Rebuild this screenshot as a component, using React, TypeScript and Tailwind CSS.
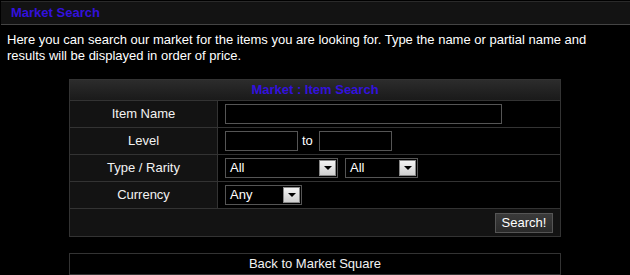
import React from "react";

function Arrow() {
  return (
    <div className="flex h-[16px] w-[17px] items-center justify-center border border-[#888] bg-gradient-to-b from-[#f4f4f4] to-[#cfcfcf]">
      <svg width="8" height="5" viewBox="0 0 8 5">
        <polygon points="0,0 8,0 4,4" fill="#000" />
      </svg>
    </div>
  );
}

function Select({ value, w }: { value: string; w: string }) {
  return (
    <div className={`flex h-[20px] ${w} items-center justify-between border border-[#555] bg-black pl-[4px] pr-[1px] text-[13px] text-white`}>
      <span>{value}</span>
      <Arrow />
    </div>
  );
}

function Row({ label, children }: { label: string; children: React.ReactNode }) {
  return (
    <div className="flex h-[27px] border-b border-[#333]">
      <div className="flex w-[148px] items-center justify-center border-r border-[#333] bg-[#131313] text-[13px] text-[#f2f2f2]">
        {label}
      </div>
      <div className="flex flex-1 items-center gap-[4px] bg-black pl-[7px]">{children}</div>
    </div>
  );
}

export default function App() {
  return (
    <div
      className="h-[275px] w-[630px] overflow-hidden bg-black text-white"
      style={{ fontFamily: '"Liberation Sans", Arial, sans-serif' }}
    >
      <div className="ml-[1px] mt-[1px] flex h-[24px] items-center border-y border-[#2a2a2a] border-b-[#444] bg-[#131313] pl-[10px]">
        <span className="text-[13px] font-bold text-[#3311dd]">Market Search</span>
      </div>
      <p className="mt-[7px] px-[7px] text-[13px] leading-[16px] text-white">
        Here you can search our market for the items you are looking for. Type the name or partial name and results will be displayed in order of price.
      </p>
      <div className="ml-[69px] mt-[15px] w-[492px] border border-[#333]">
        <div className="flex h-[21px] items-center justify-center border-b border-[#333] bg-gradient-to-b from-[#2c2c2c] to-[#1a1a1a]">
          <span className="text-[13px] font-bold text-[#3311dd]">Market : Item Search</span>
        </div>
        <Row label="Item Name">
          <div className="h-[20px] w-[277px] border border-[#555] bg-black" />
        </Row>
        <Row label="Level">
          <div className="h-[20px] w-[73px] border border-[#555] bg-black" />
          <span className="text-[13px] text-white">to</span>
          <div className="ml-[2px] h-[20px] w-[73px] border border-[#555] bg-black" />
        </Row>
        <Row label="Type / Rarity">
          <Select value="All" w="w-[113px]" />
          <div className="ml-[3px]">
            <Select value="All" w="w-[73px]" />
          </div>
        </Row>
        <Row label="Currency">
          <Select value="Any" w="w-[77px]" />
        </Row>
        <div className="flex h-[27px] items-center justify-end bg-[#131313] pr-[7px]">
          <div className="flex h-[20px] w-[58px] items-center justify-center border border-[#555] bg-gradient-to-b from-[#3a3a3a] to-[#2a2a2a] text-[13px] text-white">
            Search!
          </div>
        </div>
      </div>
      <div className="ml-[69px] mt-[16px] flex h-[22px] w-[492px] items-center justify-center border border-[#333] bg-black text-[13px] text-[#f2f2f2]">
        Back to Market Square
      </div>
    </div>
  );
}
